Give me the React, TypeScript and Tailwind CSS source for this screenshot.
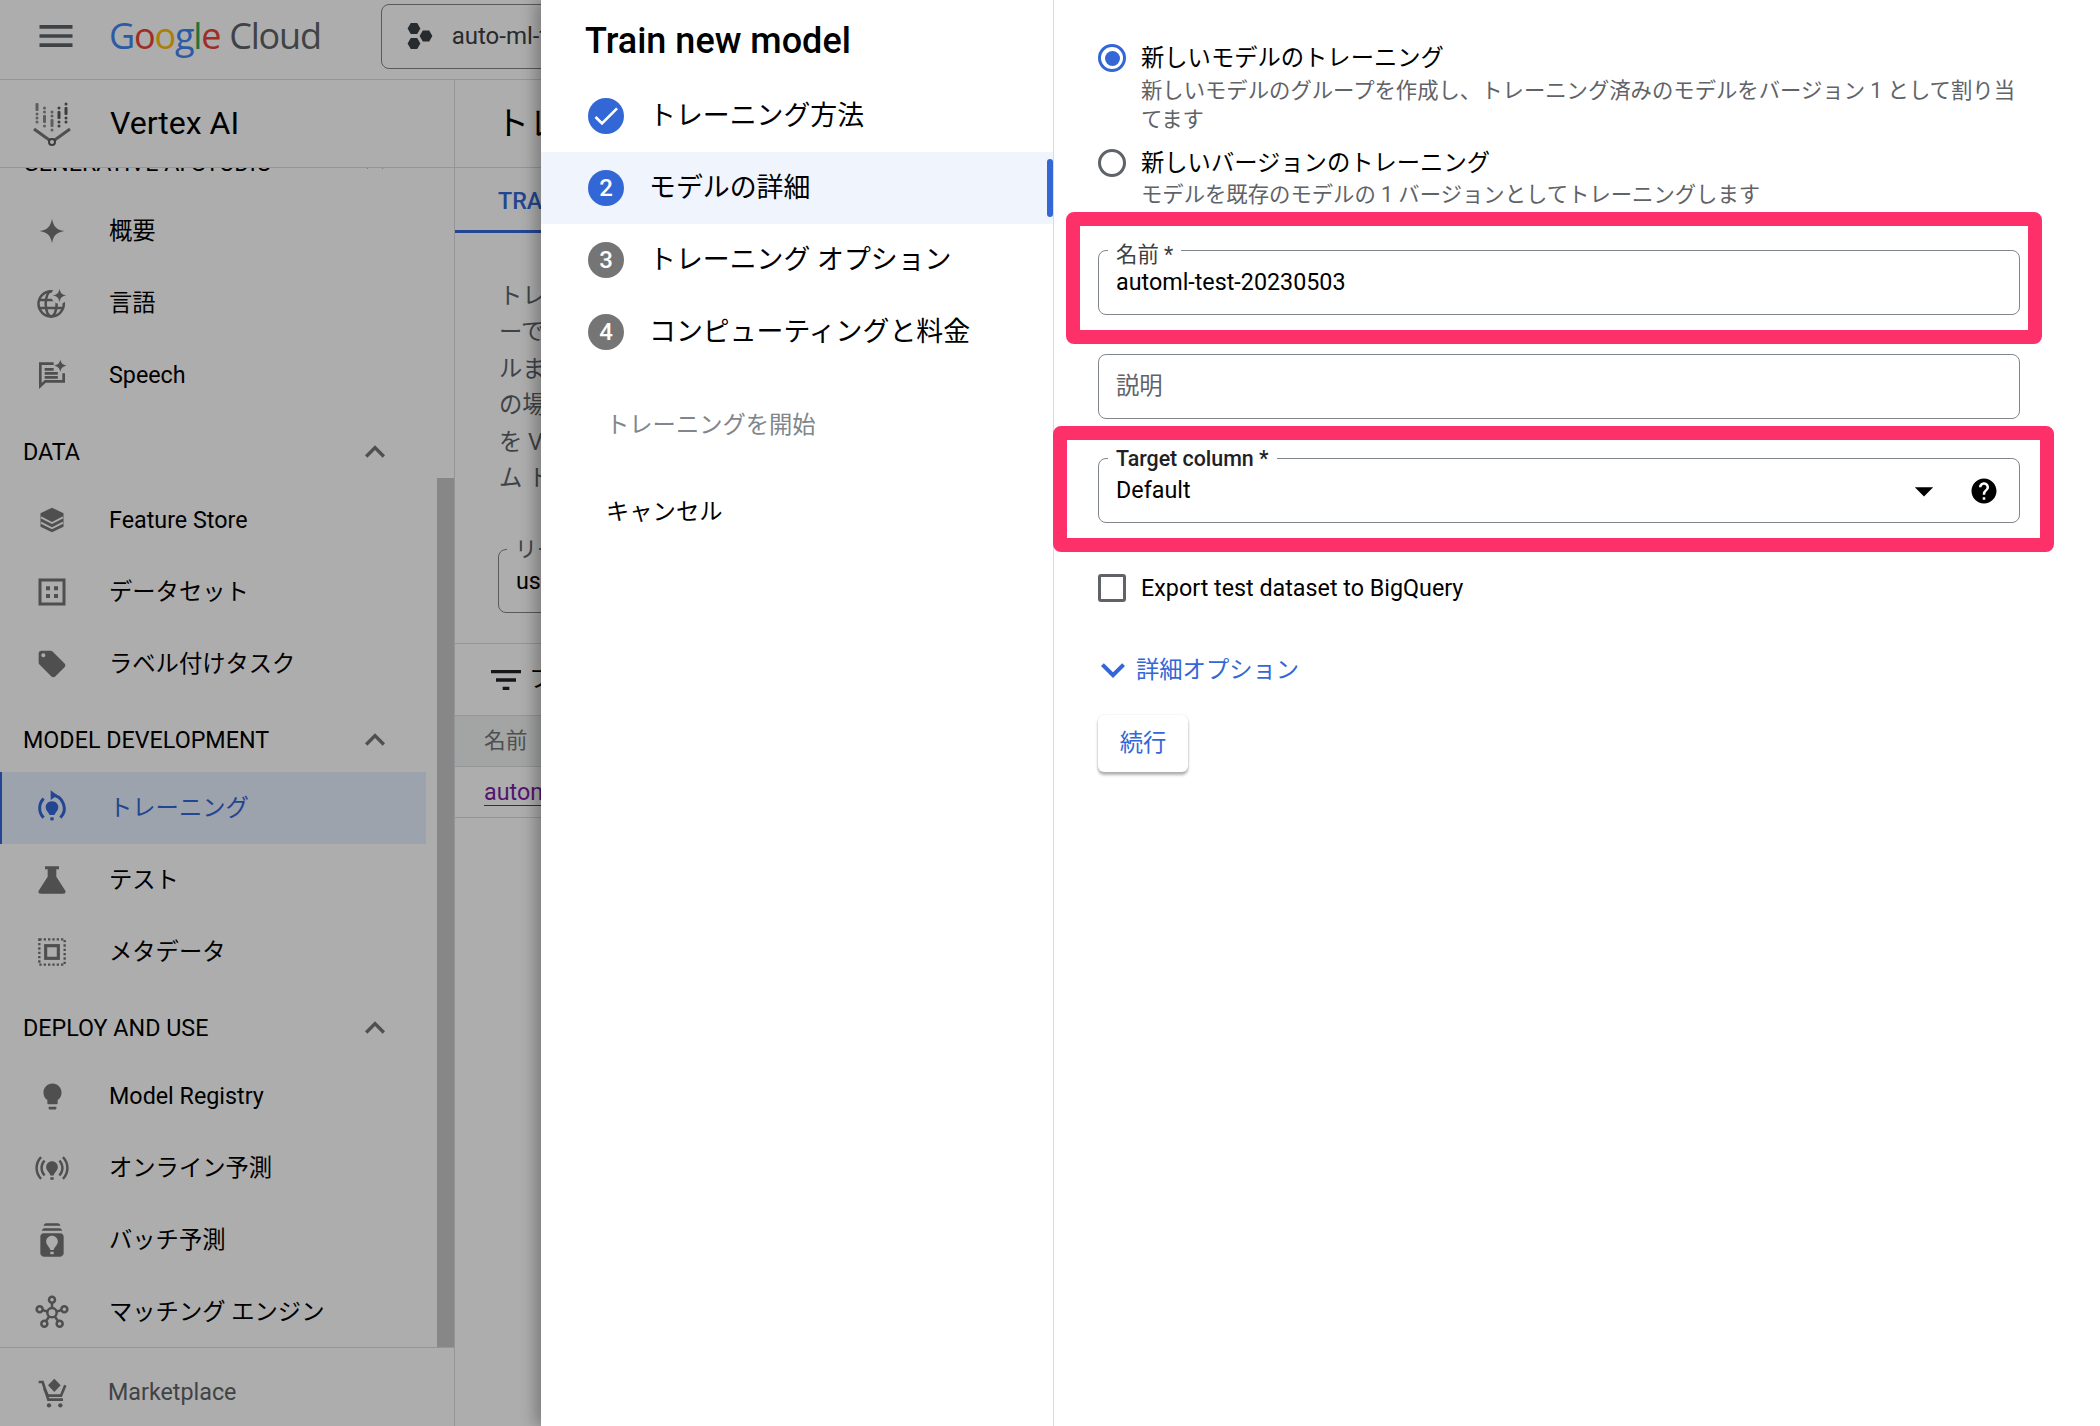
import * as React from "react";
import {
  MdMenu,
  MdLocalOffer,
  MdLightbulb,
  MdOnlinePrediction,
  MdBatchPrediction,
  MdExpandLess,
  MdExpandMore,
  MdFilterList,
  MdHelp,
  MdArrowDropDown,
  MdCheck,
} from "react-icons/md";

const GREY = "#757575";
const BLUE = "#3367d6";

function Svg({ children, color = GREY }: { children: React.ReactNode; color?: string }) {
  return (
    <svg viewBox="0 0 24 24" width={40} height={40} fill={color} stroke="none">
      {children}
    </svg>
  );
}

const sparkle = (cx: number, cy: number, r: number) =>
  `M${cx} ${cy - r}C${cx + r * 0.12} ${cy - r * 0.35} ${cx + r * 0.35} ${cy - r * 0.12} ${cx + r} ${cy}C${cx + r * 0.35} ${cy + r * 0.12} ${cx + r * 0.12} ${cy + r * 0.35} ${cx} ${cy + r}C${cx - r * 0.12} ${cy + r * 0.35} ${cx - r * 0.35} ${cy + r * 0.12} ${cx - r} ${cy}C${cx - r * 0.35} ${cy - r * 0.12} ${cx - r * 0.12} ${cy - r * 0.35} ${cx} ${cy - r}Z`;

const SparkleIcon = () => (
  <Svg>
    <path d={sparkle(12, 12, 7.4)} />
  </Svg>
);

const GlobeIcon = () => (
  <Svg>
    <g fill="none" stroke={GREY} strokeWidth={1.5}>
      <circle cx={11.5} cy={12.5} r={7.6} />
      <ellipse cx={11.5} cy={12.5} rx={3.3} ry={7.6} />
      <path d="M4.2 10.2H18.8M4.2 15H18.8" />
    </g>
    <circle cx={16.5} cy={7.5} r={5} fill="#fff" />
    <path d={sparkle(16.5, 7.5, 4)} />
  </Svg>
);

const SpeechIcon = () => (
  <Svg>
    <g fill="none" stroke={GREY} strokeWidth={1.6}>
      <path d="M13 5.2H5V18.6L8 15.8H19V11" />
      <path d="M7.6 8.6H13M7.6 11H15.5M7.6 13.4H15.5" />
    </g>
    <path d={sparkle(17, 6.4, 3.8)} />
  </Svg>
);

const FeatureIcon = () => (
  <Svg>
    <path d="M12 4.6 18.9 8V16L12 19.4 5.1 16V8Z" />
    <path d="M5.4 10.4 12 13.8 18.6 10.4M5.4 13.6 12 17 18.6 13.6" fill="none" stroke="#fff" strokeWidth={1.1} />
  </Svg>
);

const DatasetIcon = () => (
  <Svg>
    <rect x={4.8} y={4.8} width={14.4} height={14.4} fill="none" stroke={GREY} strokeWidth={1.8} />
    <path d="M8.4 8.6H10.8V11H8.4ZM13.2 8.6H15.6V11H13.2ZM8.4 13.2H10.8V15.6H8.4ZM13.2 13.2H15.6V15.6H13.2Z" />
  </Svg>
);

const TagIcon = () => <MdLocalOffer size={32} color={GREY} />;

const TrainingIcon = () => (
  <Svg color={BLUE}>
    <g fill="none" stroke={BLUE} strokeWidth={1.8}>
      <path d="M7 6.4A8 8 0 0 0 7 17.8" />
      <path d="M12 4.2A8 8 0 0 1 17 17.8" />
    </g>
    <path d="M11.2 1.4 15.2 4.3 11.2 7.2Z" />
    <path d="M12 8C14.3 8 15.8 9.7 15.8 11.6C15.8 13.5 14.2 14.6 13.4 16.2H10.6C9.8 14.6 8.2 13.5 8.2 11.6C8.2 9.7 9.7 8 12 8Z" />
    <rect x={11} y={17.6} width={2} height={1.8} />
  </Svg>
);

const FlaskIcon = () => (
  <Svg>
    <path d="M7.8 3.8H16.2V5.6H14.6V10L19.9 18.3C20.6 19.4 19.8 20.2 18.8 20.2H5.2C4.2 20.2 3.4 19.4 4.1 18.3L9.4 10V5.6H7.8Z" />
  </Svg>
);

const MetaIcon = () => (
  <Svg>
    <rect x={4.4} y={4.4} width={15.2} height={15.2} fill="none" stroke={GREY} strokeWidth={1.4} strokeDasharray="1.4 1.2" />
    <rect x={8.2} y={8.2} width={7.6} height={7.6} fill="none" stroke={GREY} strokeWidth={1.9} />
  </Svg>
);

const BulbIcon = () => <MdLightbulb size={31} color={GREY} />;
const OnlineIcon = () => <MdOnlinePrediction size={40} color={GREY} />;
const BatchIcon = () => <MdBatchPrediction size={40} color={GREY} />;

const MatchIcon = () => (
  <Svg>
    <g fill="none" stroke={GREY} strokeWidth={1.5}>
      <circle cx={12} cy={12.4} r={2.8} />
      <circle cx={12} cy={4.6} r={1.8} />
      <circle cx={4.6} cy={10.4} r={1.8} />
      <circle cx={19.4} cy={10.4} r={1.8} />
      <circle cx={7.4} cy={19} r={1.8} />
      <circle cx={16.6} cy={19} r={1.8} />
      <path d="M12 6.4V9.6M6.4 10.9 9.3 11.7M17.6 10.9 14.7 11.7M8.4 17.5 10.3 14.7M15.6 17.5 13.7 14.7" />
    </g>
  </Svg>
);

const CartIcon = () => (
  <Svg>
    <g fill="none" stroke={GREY} strokeWidth={1.6}>
      <path d="M4 5.4H6.4L9.8 16H18.6" />
      <path d="M7.4 9.2 9.4 13.6H17.4L20 7.4" />
    </g>
    <path d="M13.4 3.4 17.2 7.4 13.4 11.4 9.6 7.4Z" />
    <circle cx={10.2} cy={19.4} r={1.3} />
    <circle cx={17} cy={19.4} r={1.3} />
  </Svg>
);

function VertexLogo() {
  return (
    <svg viewBox="0 0 38 44" width={38} height={44}>
      <g fill="#8b8b8b">
        <rect x={2.5} y={1} width={3} height={8} rx={1} />
        <circle cx={4} cy={12} r={1.5} />
        <circle cx={4} cy={16} r={1.5} />
        <circle cx={4} cy={20} r={1.5} />
        <circle cx={11.5} cy={6} r={1.5} />
        <circle cx={11.5} cy={10} r={1.5} />
        <rect x={10} y={13} width={3} height={8} rx={1} />
        <circle cx={11.5} cy={24} r={1.5} />
        <circle cx={19} cy={10} r={1.5} />
        <circle cx={19} cy={14} r={1.5} />
        <rect x={17.5} y={17} width={3} height={8} rx={1} />
        <circle cx={19} cy={28} r={1.5} />
      </g>
      <g fill="#5a5a5a">
        <circle cx={26} cy={6} r={1.5} />
        <rect x={24.5} y={9} width={3} height={8} rx={1} />
        <circle cx={26} cy={20} r={1.5} />
        <circle cx={26} cy={24} r={1.5} />
        <circle cx={33} cy={2} r={1.5} />
        <rect x={31.5} y={5} width={3} height={8} rx={1} />
        <circle cx={33} cy={16} r={1.5} />
        <circle cx={33} cy={20} r={1.5} />
      </g>
      <path d="M1 27 19 40 37 27" fill="none" stroke="#757575" strokeWidth={3} />
      <circle cx={19} cy={40} r={3} fill="#fff" stroke="#5a5a5a" strokeWidth={2} />
    </svg>
  );
}

function ProjectIcon() {
  const hex = (x: number, y: number) =>
    `${x - 6.4},${y} ${x - 3.2},${y - 5.6} ${x + 3.2},${y - 5.6} ${x + 6.4},${y} ${x + 3.2},${y + 5.6} ${x - 3.2},${y + 5.6}`;
  return (
    <svg viewBox="0 0 26 28" width={26} height={28} fill="#3c4043">
      <polygon points={hex(7, 6.5)} />
      <polygon points={hex(7, 21.5)} />
      <polygon points={hex(19, 14)} />
    </svg>
  );
}

type NavRow = { label: string; icon: React.ReactNode; active?: boolean };
type NavSection = { title: string; items: NavRow[] };

const SECTIONS: NavSection[] = [
  {
    title: "GENERATIVE AI STUDIO",
    items: [
      { label: "概要", icon: <SparkleIcon /> },
      { label: "言語", icon: <GlobeIcon /> },
      { label: "Speech", icon: <SpeechIcon /> },
    ],
  },
  {
    title: "DATA",
    items: [
      { label: "Feature Store", icon: <FeatureIcon /> },
      { label: "データセット", icon: <DatasetIcon /> },
      { label: "ラベル付けタスク", icon: <TagIcon /> },
    ],
  },
  {
    title: "MODEL DEVELOPMENT",
    items: [
      { label: "トレーニング", icon: <TrainingIcon />, active: true },
      { label: "テスト", icon: <FlaskIcon /> },
      { label: "メタデータ", icon: <MetaIcon /> },
    ],
  },
  {
    title: "DEPLOY AND USE",
    items: [
      { label: "Model Registry", icon: <BulbIcon /> },
      { label: "オンライン予測", icon: <OnlineIcon /> },
      { label: "バッチ予測", icon: <BatchIcon /> },
      { label: "マッチング エンジン", icon: <MatchIcon /> },
    ],
  },
];

function Sidebar() {
  return (
    <aside className="flex w-[455px] shrink-0 flex-col border-r border-[#dadce0]">
      <div className="flex h-[88px] shrink-0 items-center border-b border-[#dadce0] pl-[33px]">
        <VertexLogo />
        <span className="ml-[39px] pb-[2px] text-[32px] text-[#000]">Vertex AI</span>
      </div>
      <nav className="relative min-h-0 flex-1 overflow-hidden">
        <div className="-mt-[37px] flex flex-col gap-2">
          {SECTIONS.map((s, i) => (
            <div key={s.title} className={i === 0 ? "mb-px" : ""}>
              <div className="flex h-16 w-[426px] items-center justify-between pl-[23px] pr-[31px]">
                <span className="text-[23.3px] text-[#000]">{s.title}</span>
                <MdExpandLess size={40} color={GREY} />
              </div>
              {s.items.map((it) => (
                <div
                  key={it.label}
                  className={[
                    "flex h-[72px] w-[426px] items-center",
                    it.active ? "border-l-2 border-[#3367d6] bg-[#e8f0fe] pl-[30px] text-[#3367d6]" : "pl-[32px] text-[#000]",
                  ].join(" ")}
                >
                  <span className="flex h-10 w-10 items-center justify-center">{it.icon}</span>
                  <span className="ml-[37px] text-[23.3px]">{it.label}</span>
                </div>
              ))}
            </div>
          ))}
        </div>
        <div className="absolute bottom-0 right-0 top-[310px] w-[17px] bg-[#c8c8c8]" />
      </nav>
      <div className="flex h-[79px] shrink-0 items-center border-t border-[#dadce0] pl-[32px] pt-[11px] text-[#5f6368]">
        <CartIcon />
        <span className="ml-[36px] text-[23.3px]">Marketplace</span>
      </div>
    </aside>
  );
}

function TopBar() {
  return (
    <header className="flex h-20 items-center border-b border-[#dadce0] pb-[7px] pl-[36px]">
      <MdMenu size={44} color="#5f6368" className="-ml-[2px]" />
      <div className="ml-[31px] flex items-center whitespace-nowrap font-['Open_Sans',sans-serif] text-[36px] leading-none tracking-[-1.2px]">
        <span className="text-[#4285f4]">G</span>
        <span className="text-[#ea4335]">o</span>
        <span className="text-[#fbbc04]">o</span>
        <span className="text-[#4285f4]">g</span>
        <span className="text-[#34a853]">l</span>
        <span className="text-[#ea4335]">e</span>
        <span className="ml-[9px] text-[#5f6368]">Cloud</span>
      </div>
      <div className="ml-[60px] flex h-[65px] w-[400px] items-center rounded-lg border border-[#80868b] pl-[25px]">
        <ProjectIcon />
        <span className="ml-[19px] text-[24px] text-[#3c4043]">auto-ml-test</span>
      </div>
    </header>
  );
}

function MainContent() {
  return (
    <main className="min-w-0 flex-1 overflow-hidden whitespace-nowrap">
      <div className="flex h-[88px] items-center border-b border-[#dadce0] pl-[41px] text-[33px] text-[#000]">
        トレーニング
      </div>
      <div className="h-[65px] w-[300px] border-b-[3px] border-[#3367d6] pl-[43px] pt-[16px] text-[23.3px] font-medium text-[#3367d6]">
        TRAINING PIPELINES
      </div>
      <div className="pl-[44px] pt-[45px] text-[23.3px] leading-[36.4px] text-[#5f6368]">
        <div>トレーニング パイプラインは、モデルをトレーニングするためのものです</div>
        <div>ーでトレーニング</div>
        <div>ルまたはカスタム</div>
        <div>の場合はこちらから</div>
        <div>を Vertex AI で</div>
        <div>ム トレーニング</div>
      </div>
      <div className="relative ml-[43px] mt-[53px] flex h-[64px] w-[300px] items-center rounded-lg border border-[#80868b] pl-[17px] text-[23.3px] text-[#000]">
        <span className="absolute -top-[14px] left-[8px] bg-white px-2 text-[22px] leading-[27px] text-[#5f6368]">リージョン</span>
        us-central1
      </div>
      <div className="mt-[30px] flex h-[72px] items-center border-t border-[#dadce0] pl-[34px] text-[23.3px] text-[#000]">
        <MdFilterList size={40} color="#202124" className="-ml-[3px]" />
        <span className="ml-[3px]">フィルタ</span>
      </div>
      <div className="flex h-[52px] items-center border-y border-[#dadce0] bg-[#f1f3f4] pl-[29px] text-[21.7px] text-[#757575]">
        名前
      </div>
      <div className="flex h-[51px] items-center border-b border-[#dadce0] pl-[29px] text-[23.3px]">
        <span className="border-b border-[#7b1fa2] leading-[26px] text-[#7b1fa2]">automl-test</span>
      </div>
    </main>
  );
}

function Stepper() {
  const steps = [
    { n: "1", label: "トレーニング方法", done: true },
    { n: "2", label: "モデルの詳細", current: true },
    { n: "3", label: "トレーニング オプション" },
    { n: "4", label: "コンピューティングと料金" },
  ];
  return (
    <div className="w-[513px] shrink-0 border-r border-[#dadce0]">
      <h2 className="pl-[44px] pt-[17px] text-[36px] font-medium leading-[48px] text-[#000]">Train new model</h2>
      <div className="mt-[15px]">
        {steps.map((s) => (
          <div key={s.n} className={["relative flex h-[72px] items-center pl-[47px]", s.current ? "bg-[#f0f4fd]" : ""].join(" ")}>
            <span
              className={[
                "flex h-9 w-9 items-center justify-center rounded-full text-[24px] font-medium text-white",
                s.done || s.current ? "bg-[#3367d6]" : "bg-[#757575]",
              ].join(" ")}
            >
              {s.done ? <MdCheck size={32} color="#fff" /> : s.n}
            </span>
            <span className="ml-[25px] text-[26.9px] text-[#000]">{s.label}</span>
            {s.current ? <span className="absolute bottom-[7px] right-0 top-[7px] w-[6px] rounded-[3px] bg-[#3367d6]" /> : null}
          </div>
        ))}
      </div>
      <div className="mt-[41px] pl-[65px] text-[23.3px] leading-[32px] text-[#80868b]">トレーニングを開始</div>
      <div className="mt-[55px] pl-[65px] text-[23.3px] leading-[32px] text-[#000]">キャンセル</div>
    </div>
  );
}

function Radio({ checked }: { checked?: boolean }) {
  return (
    <span
      className={[
        "flex h-[28px] w-[28px] shrink-0 items-center justify-center rounded-full border-[3px]",
        checked ? "border-[#3367d6]" : "border-[#5f6368]",
      ].join(" ")}
    >
      {checked ? <span className="h-[15px] w-[15px] rounded-full bg-[#3367d6]" /> : null}
    </span>
  );
}

function Callout({ className }: { className: string }) {
  return <div className={["pointer-events-none absolute rounded-lg border-[14px] border-[#fe3069]", className].join(" ")} />;
}

function Form() {
  return (
    <div className="min-w-0 flex-1 pl-[44px] pt-[44px] text-[#000]">
      <div className="flex h-7 items-center gap-[15px] text-[23.3px]">
        <Radio checked />
        <span>新しいモデルのトレーニング</span>
      </div>
      <p className="ml-[43px] mt-1 w-[880px] text-[21.35px] leading-[29px] text-[#5f6368]">
        新しいモデルのグループを作成し、トレーニング済みのモデルをバージョン 1 として割り当てます
      </p>
      <div className="mt-[15px] flex h-7 items-center gap-[15px] text-[23.3px]">
        <Radio />
        <span>新しいバージョンのトレーニング</span>
      </div>
      <p className="ml-[43px] mt-[3px] text-[21.35px] leading-[29px] text-[#5f6368]">
        モデルを既存のモデルの 1 バージョンとしてトレーニングします
      </p>

      <div className="relative mt-[41px] flex h-[65px] w-[922px] items-center rounded-lg border border-[#80868b] pl-[17px] text-[23.3px]">
        <span className="absolute -top-[10px] left-[9px] bg-white px-2 text-[21.4px] leading-[27px] text-[#3c4043]">名前 *</span>
        automl-test-20230503
        <Callout className="-bottom-[30px] -left-[33px] -right-[23px] -top-[39px]" />
      </div>

      <div className="mt-[39px] flex h-[65px] w-[922px] items-center rounded-lg border border-[#80868b] pl-[17px] text-[23.3px] text-[#5f6368]">
        説明
      </div>

      <div className="relative mt-[39px] flex h-[65px] w-[922px] items-center rounded-lg border border-[#80868b] pl-[17px] text-[23.3px]">
        <span className="absolute -top-[14px] left-[9px] bg-white px-2 text-[21.4px] font-medium leading-[27px] text-[#202124]">Target column *</span>
        <span className="flex-1">Default</span>
        <MdArrowDropDown size={44} color="#000" className="mr-[23px]" />
        <MdHelp size={30} color="#000" className="mr-[20px]" />
        <Callout className="-bottom-[30px] -left-[46px] -right-[35px] -top-[33px]" />
      </div>

      <div className="mt-[51px] flex h-7 items-center gap-[15px] text-[23.3px]">
        <span className="h-[28px] w-[28px] shrink-0 rounded-[3px] border-[3px] border-[#5f6368]" />
        <span>Export test dataset to BigQuery</span>
      </div>

      <div className="mt-[54px] flex h-7 items-center text-[23.3px] text-[#3367d6]">
        <MdExpandMore size={48} color={BLUE} className="-ml-[9px]" />
        <span className="ml-[-1px]">詳細オプション</span>
      </div>

      <button
        type="button"
        className="mt-[31px] h-[57px] w-[90px] rounded-[6px] bg-white text-[23.3px] text-[#3367d6] shadow-[0_3px_3px_rgba(0,0,0,0.3),0_0_2px_rgba(0,0,0,0.12)]"
      >
        続行
      </button>
    </div>
  );
}

export default function App() {
  return (
    <div className="relative h-[1426px] w-[2100px] overflow-hidden bg-white font-['Roboto','Noto_Sans_CJK_JP',sans-serif]">
      <TopBar />
      <div className="flex h-[1346px]">
        <Sidebar />
        <MainContent />
      </div>
      <div className="absolute inset-0 bg-black/[0.32]" />
      <div className="absolute inset-y-0 left-[541px] right-0 flex bg-white shadow-[-6px_0_14px_rgba(0,0,0,0.28)]">
        <Stepper />
        <Form />
      </div>
    </div>
  );
}
